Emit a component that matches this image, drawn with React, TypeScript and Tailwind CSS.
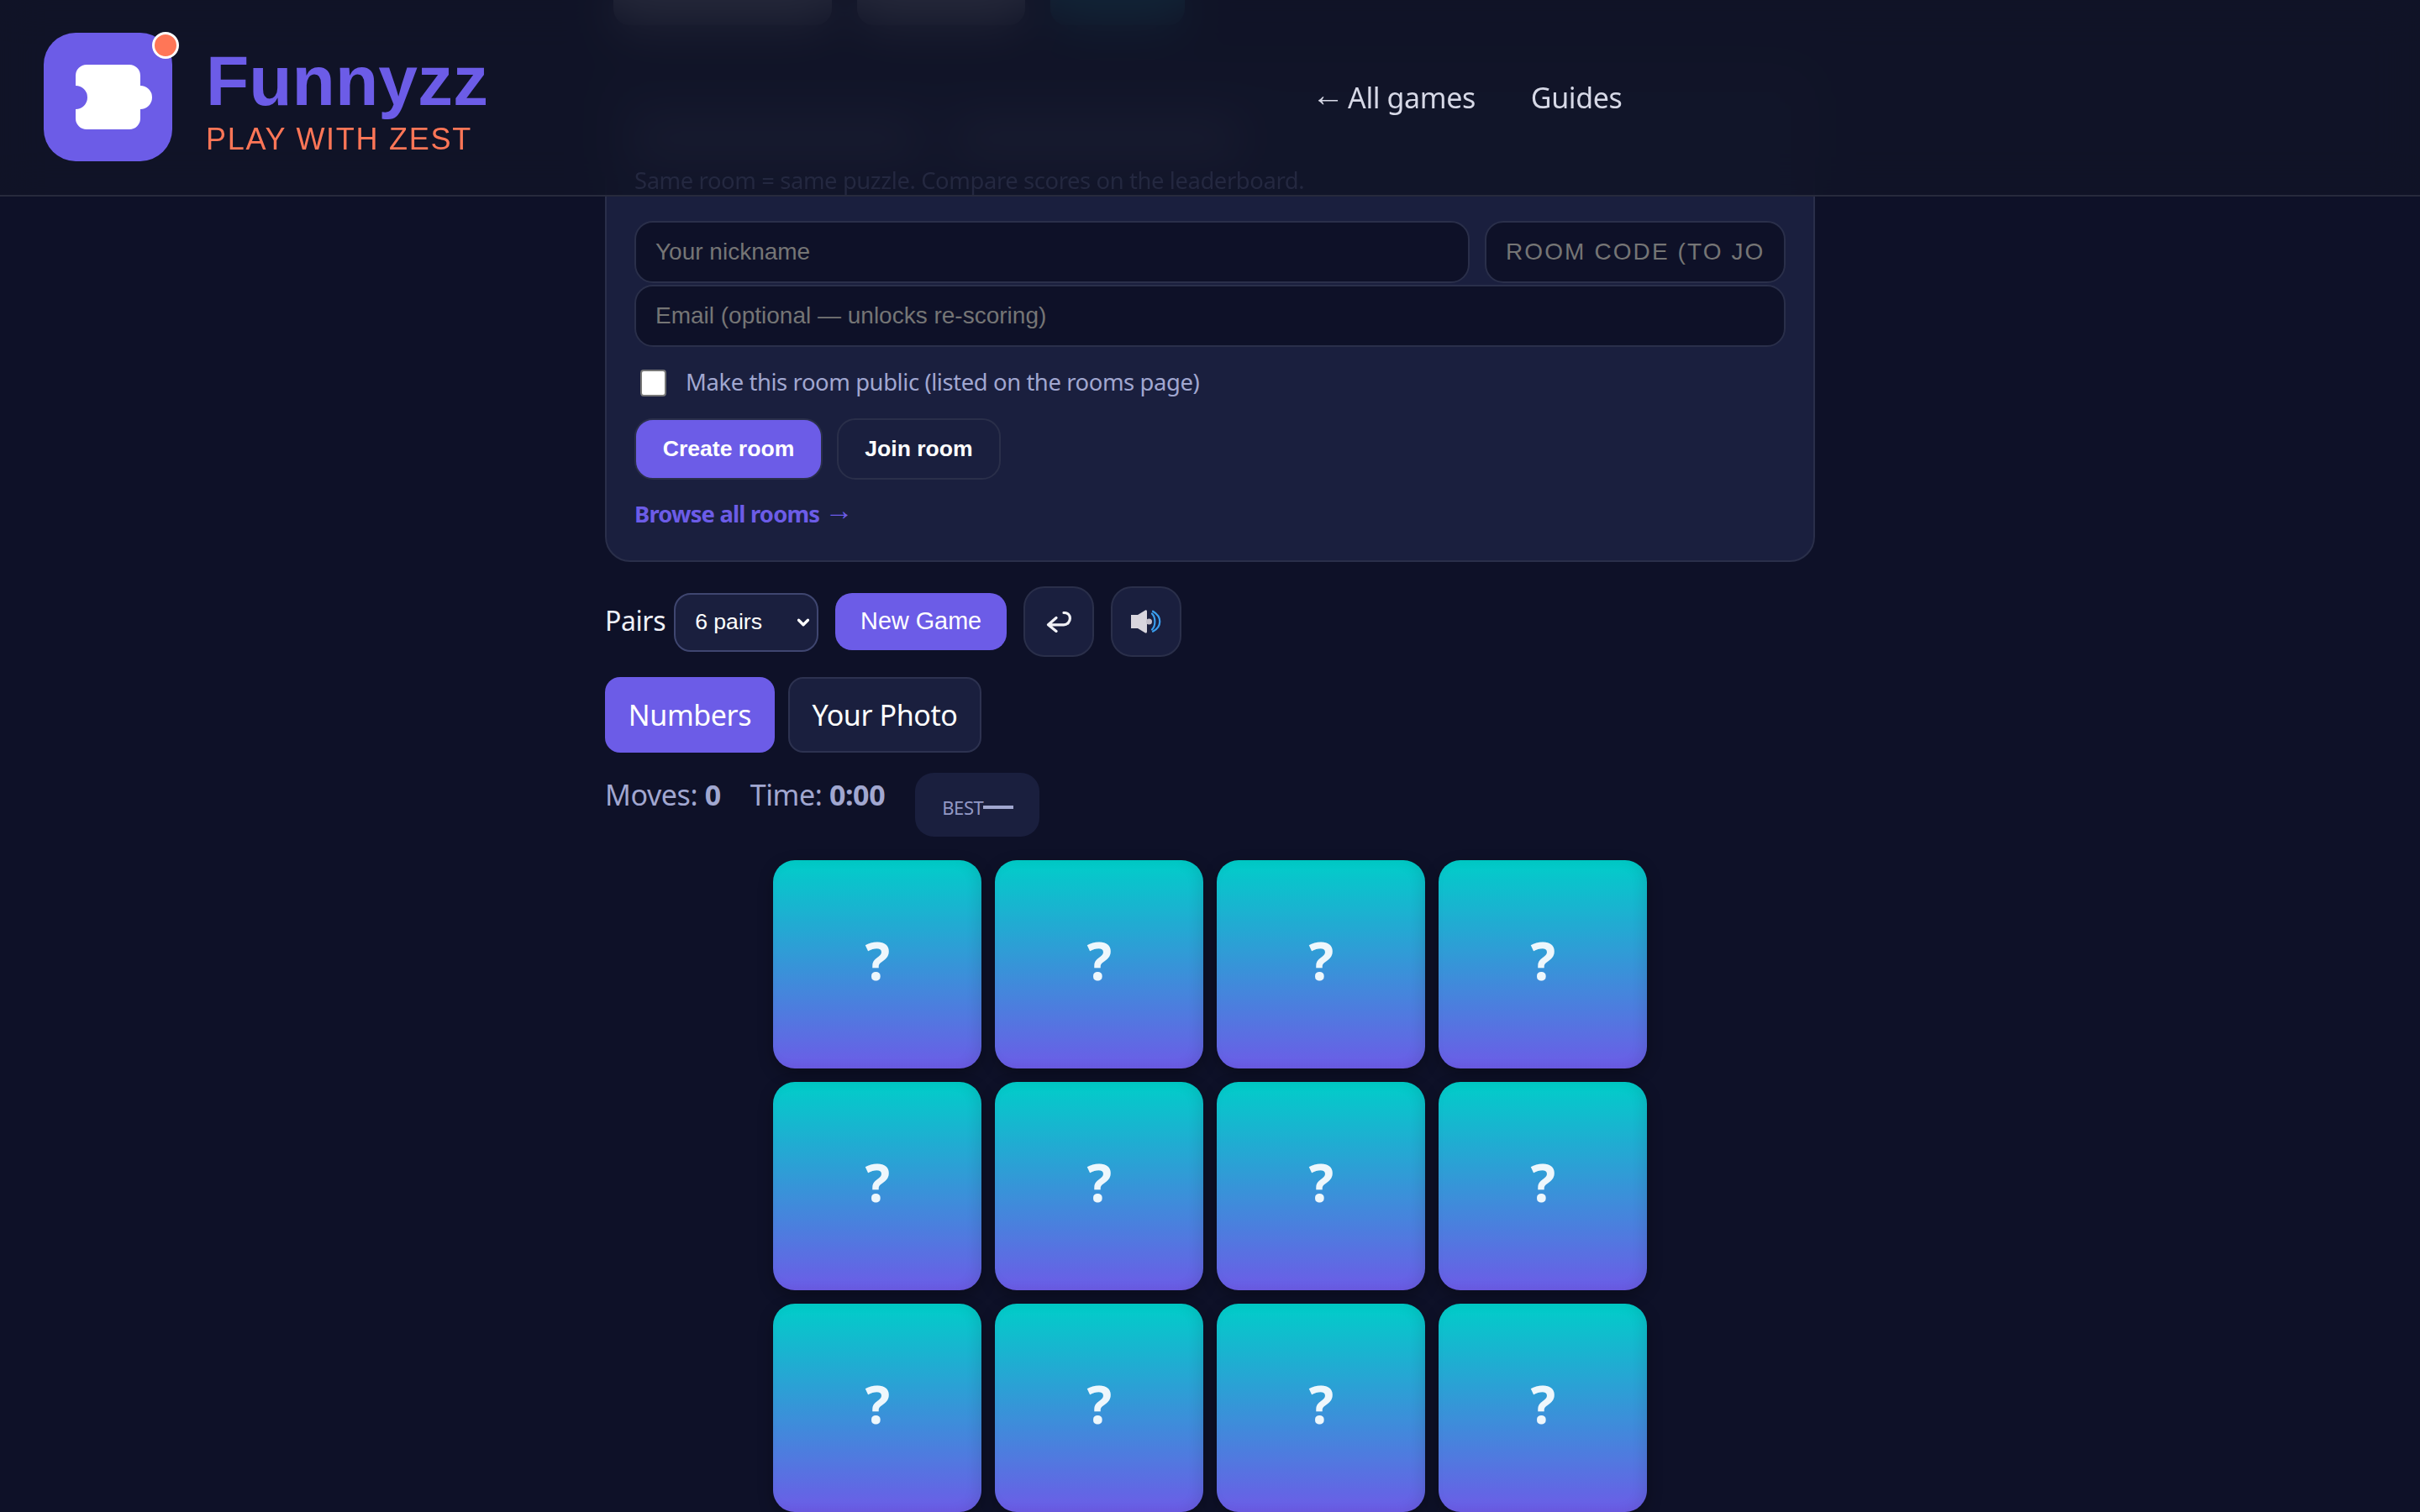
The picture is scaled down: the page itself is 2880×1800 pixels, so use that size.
import { ChevronDown } from "lucide-react";

const cards = Array.from({ length: 12 }, (_, i) => i);

function LogoMark() {
    return (
        <div className="relative w-[153px] h-[153px] rounded-[38px] bg-[#6c5ce7] flex items-center justify-center shrink-0">
            <svg width="91" height="77" viewBox="0 0 91 77" className="ml-[14px]">
                <path fill="#fff" d="M13 0H64a13 13 0 0 1 13 13V25a14 14 0 0 1 0 28V64a13 13 0 0 1-13 13H13A13 13 0 0 1 0 64V53a14 14 0 0 0 0-28V13A13 13 0 0 1 13 0Z" />
            </svg>
            <span className="absolute top-[-1px] right-[-8px] w-[32px] h-[32px] rounded-full bg-[#ff7657] border-[3px] border-white" />
        </div>
    );
}

function SpeakerIcon() {
    return (
        <svg width="36" height="28" viewBox="0 0 36 28">
            <path fill="#d8d5dd" d="M0 6H8L17 0.500C18.500 0 19 1 19 2V26C19 27 18.500 28 17 27.500L8 22H0Z" />
            <circle cx="21.500" cy="14" r="3.500" fill="#c4c0cb" />
            <path fill="none" stroke="#3a9eee" strokeWidth="2.200" strokeLinecap="round" d="M25 4.500C29.500 9 29.500 19 25 23.500" />
            <path fill="none" stroke="#3a9eee" strokeWidth="2.200" strokeLinecap="round" d="M26 1.700C37 8 37 20 26 25.700" />
        </svg>
    );
}

function UndoIcon() {
    return (
        <svg width="30" height="25" viewBox="0 0 30 25">
            <path fill="none" stroke="#f1f1f6" strokeWidth="3.200" strokeLinecap="round" strokeLinejoin="round" d="M21 1.500C26 1.500 28.400 4.500 28.400 8C28.400 12 25.500 15.800 21 15.800H3M12 7.500L2.500 15.800L12 23.500" />
        </svg>
    );
}

export default function App() {
    return (
        <div className="relative h-[1800px] overflow-hidden bg-[#0e1128] font-['Noto_Sans',sans-serif] tracking-[-0.025em]">
            <header className="absolute top-0 left-0 right-0 z-10 h-[234px] flex items-center pl-[52px] border-b-2 border-[#272a3c] bg-[#111427]/90 backdrop-blur-[26px]">
                <a className="flex items-center gap-[40px] w-[1509px] shrink-0 pb-[2px] tracking-normal">
                    <LogoMark />
                    <div className="flex flex-col mt-[10px] font-['Liberation_Sans',sans-serif]">
                        <span className="text-[84px] leading-[88px] font-bold text-[#6c5ce7]">Funnyzz</span>
                        <span className="text-[36px] leading-[44px] mt-[4px] tracking-[0.048em] text-[#ff7657]">PLAY WITH ZEST</span>
                    </div>
                </a>
                <nav className="flex items-center gap-[66px] text-[34px] text-[#d6d8e6]">
                    <a><span className="font-['Liberation_Sans',sans-serif] text-[39px] leading-none align-[3px] mr-[-4px]">←</span> All games</a>
                    <a>Guides</a>
                </nav>
            </header>

            <main className="w-[1440px] mx-auto">
                <div className="flex gap-[30px] h-[60px] mt-[-30px] pl-[10px]">
                    <div className="w-[260px] rounded-[20px] bg-[#d6d7de]" />
                    <div className="w-[200px] rounded-[20px] bg-[#d6d7de]" />
                    <div className="w-[160px] rounded-[20px] bg-[#1fb0bd]" />
                </div>

                <section className="mt-[50px] h-[589px] rounded-[30px] border-2 border-[#2a2f4a] bg-[#1a1f3e] px-[33px] flex flex-col">
                    <div className="flex gap-[40px] h-[50px] mt-[58px]">
                        <div className="w-[340px] rounded-[12px] bg-[#55597a]" />
                        <div className="w-[340px] rounded-[12px] bg-[#55597a]" />
                    </div>
                    <p className="relative z-20 mt-[5px] h-[40px] leading-[40px] text-[27.4px] text-[#242840]">Same room = same puzzle. Compare scores on the leaderboard.</p>
                    <div className="mt-[28px] flex flex-col gap-[2px] font-['Liberation_Sans',sans-serif] text-[28px] tracking-normal">
                        <div className="flex gap-[18px]">
                            <input placeholder="Your nickname" className="w-[994px] h-[74px] px-[23px] rounded-[22px] border-2 border-[#2a2f4a] bg-[#0e1128] placeholder:text-[#757575]" />
                            <input placeholder="Room code (to join)" className="w-[358px] h-[74px] px-[23px] rounded-[22px] border-2 border-[#2a2f4a] bg-[#0e1128] uppercase tracking-[0.075em] placeholder:text-[#757575]" />
                        </div>
                        <input placeholder="Email (optional — unlocks re-scoring)" className="w-full h-[74px] px-[23px] rounded-[22px] border-2 border-[#2a2f4a] bg-[#0e1128] placeholder:text-[#757575]" />
                    </div>
                    <label className="flex items-center mt-[25px] pl-[7px] gap-[23px] text-[27.4px] leading-[32px] text-[#a1a7d0]">
                        <input type="checkbox" className="appearance-none w-[31px] h-[32px] mt-[2px] rounded-[4px] bg-white border-2 border-[#767676]" />
                        Make this room public (listed on the rooms page)
                    </label>
                    <div className="flex gap-[17px] mt-[26px] font-['Liberation_Sans',sans-serif] text-[26.6px] font-bold tracking-normal">
                        <button className="w-[224px] h-[73px] rounded-[22px] border-2 border-[#2a2f4a] bg-[#6c5ce7] text-white">Create room</button>
                        <button className="w-[195px] h-[73px] rounded-[22px] border-2 border-[#2a2f4a] text-white">Join room</button>
                    </div>
                    <a className="mt-[19px] text-[27.4px] leading-[36px] font-bold tracking-[-0.03em] text-[#6c5ce7]">Browse all rooms <span className="font-['Liberation_Sans',sans-serif] font-normal text-[34px] leading-none align-[3px]">→</span></a>
                </section>

                <div className="flex items-center h-[84px] mt-[29px]">
                    <span className="text-[32px] text-[#eef0f8] mb-[2px]">Pairs</span>
                    <div className="relative ml-[10px] mt-[2px]">
                        <select className="appearance-none w-[172px] h-[70px] pl-[23px] rounded-[20px] border-2 border-[#3f4670] bg-[#1a1f3e] text-[26.6px] text-white tracking-normal font-['Liberation_Sans',sans-serif]">
                            <option>6 pairs</option>
                        </select>
                        <ChevronDown size={22} strokeWidth={3.5} className="absolute right-[7px] top-[24px] text-white pointer-events-none" />
                    </div>
                    <button className="ml-[20px] w-[204px] h-[68px] rounded-[20px] bg-[#6c5ce7] text-[28.8px] text-white tracking-normal font-['Liberation_Sans',sans-serif]">New Game</button>
                    <button className="ml-[20px] w-[84px] h-[84px] rounded-[25px] border-2 border-[#2a2f4a] bg-[#1a1f3e] flex items-center justify-center"><UndoIcon /></button>
                    <button className="ml-[20px] w-[84px] h-[84px] rounded-[25px] border-2 border-[#2a2f4a] bg-[#1a1f3e] flex items-center justify-center"><SpeakerIcon /></button>
                </div>

                <div className="flex gap-[16px] mt-[24px]">
                    <button className="w-[202px] h-[90px] rounded-[18px] bg-[#6c5ce7] text-[34px] text-white">Numbers</button>
                    <button className="w-[230px] h-[90px] rounded-[18px] border-2 border-[#2d3250] bg-[#1a1f3e] text-[34px] text-white">Your Photo</button>
                </div>

                <div className="flex items-start h-[76px] mt-[24px] text-[34px] text-[#a1a7d0]">
                    <span className="mt-[1px]">Moves: <b>0</b></span>
                    <span className="ml-[35px] mt-[1px]">Time: <b>0:00</b></span>
                    <div className="ml-[36px] w-[148px] h-[76px] rounded-[22px] bg-[#1a1f3e] flex items-center pl-[32px] pt-[6px]">
                        <span className="text-[22px] text-[#9298c4]">BEST</span>
                        <span className="w-[36px] h-[4px] bg-[#a1a7d0]" />
                    </div>
                </div>

                <div className="grid grid-cols-[repeat(4,248px)] gap-[16px] mt-[28px] justify-center">
                    {cards.map((c) => (
                        <button key={c} className="h-[248px] pb-[10px] rounded-[26px] bg-linear-to-b/srgb from-[#00cec9] to-[#6c5ce7] shadow-[inset_-6px_0_14px_rgba(0,0,0,0.08),0_6px_18px_rgba(0,0,0,0.3)] text-[62px] font-bold text-[#eef7fc]">?</button>
                    ))}
                </div>
            </main>
        </div>
    );
}
